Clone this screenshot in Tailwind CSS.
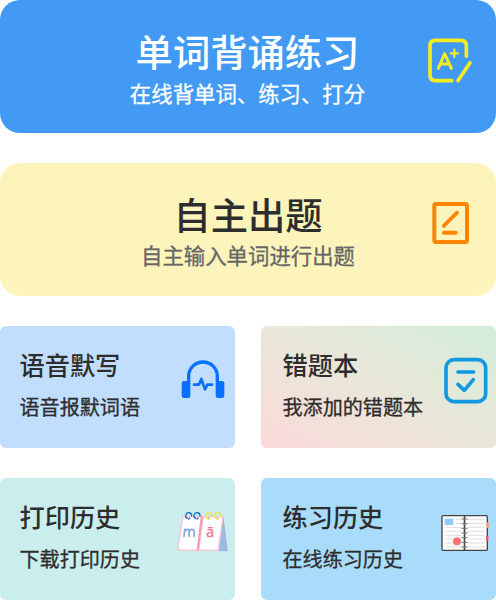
<!DOCTYPE html>
<html lang="zh-CN">
  <head>
    <meta charset="UTF-8" />
    <meta name="viewport" content="width=device-width, initial-scale=1.0" />
    <title>单词背诵练习</title>
    <script src="https://cdn.jsdelivr.net/npm/@tailwindcss/browser@4"></script>
  </head>
  <body class="bg-white font-['Noto_Sans_CJK_SC',sans-serif]">
    <div class="flex h-[600px] w-[496px] flex-col gap-[30px] overflow-hidden">
      <!-- recite -->
      <div class="flex h-[133px] shrink-0 rounded-[20px] bg-[#429af5] text-white">
        <div class="flex-1 pt-[31px] pl-[67px] text-center">
          <h1 class="text-[37.3px] leading-10 font-medium">单词背诵练习</h1>
          <p class="mt-2 text-[21.4px] leading-7 [-webkit-text-stroke:0.3px_#fff]">在线背单词、练习、打分</p>
        </div>
        <svg class="mt-[38px] mr-[22px] h-[46px] w-[46px]" viewBox="39 39 138 138" fill="none" stroke="#f5ec20" stroke-width="11" stroke-linecap="round" stroke-linejoin="round">
          <path d="M154 94V62Q154 46 138 46H61Q45 46 45 62V150Q45 167 61 167H110" />
          <path d="M165 113L129 167" />
          <path d="M70 130L89 86L109 130M77 117H102" stroke-width="9" />
          <path d="M118 74V96M107 85H129" stroke-width="7" />
        </svg>
      </div>

      <!-- custom questions -->
      <div class="flex h-[133px] shrink-0 rounded-[20px] bg-[#fcf4bb]">
        <div class="flex-1 pt-[31px] pl-[64px] text-center">
          <h1 class="text-[37.3px] leading-10 font-medium text-[#2d2d2d]">自主出题</h1>
          <p class="mt-[7px] text-[21.4px] leading-7 text-[#666] [-webkit-text-stroke:0.3px_#666]">自主输入单词进行出题</p>
        </div>
        <svg class="mt-[38px] mr-[26px] h-11 w-[38px]" viewBox="50 48 114 132" fill="none" stroke="#ff8400" stroke-width="12" stroke-linecap="round" stroke-linejoin="round">
          <rect x="57" y="57" width="98" height="114" rx="5" />
          <path d="M86 122L125 83" stroke-width="11" />
          <path d="M81 119V128H90Z" fill="#ff8400" stroke="none" />
          <path d="M86 143H121" />
        </svg>
      </div>

      <div class="grid grid-cols-2 gap-x-[26px] gap-y-[30px] text-[#2d2d2d]">
        <!-- dictation -->
        <div class="flex h-[122px] justify-between rounded-[6px] bg-[#c1deff] pt-6 pl-[19.5px]">
          <div>
            <h2 class="text-[25.2px] leading-7 font-medium">语音默写</h2>
            <p class="mt-[17px] text-[20.1px] leading-6 [-webkit-text-stroke:0.3px_#2d2d2d]">语音报默词语</p>
          </div>
          <svg class="mt-[9px] mr-[10px] h-10 w-[44px]" viewBox="47 117 132 120" fill="none" stroke="#0870ff" stroke-width="10" stroke-linecap="round" stroke-linejoin="round">
            <path d="M70 186V168A43 42 0 0 1 156 168V186" />
            <rect x="49" y="183" width="26" height="51" rx="7" fill="#0870ff" stroke="none" />
            <rect x="151" y="183" width="26" height="51" rx="7" fill="#0870ff" stroke="none" />
            <path d="M86 194H101L108 177L119 208L126 194H140" stroke-width="8" />
          </svg>
        </div>

        <!-- mistakes -->
        <div class="flex h-[122px] justify-between rounded-[6px] bg-linear-to-tr from-[#fbd9d9] via-[#e9e7d9] to-[#d2edda] pt-6 pl-[21.5px]">
          <div>
            <h2 class="text-[25.2px] leading-7 font-medium">错题本</h2>
            <p class="mt-[17px] text-[20.1px] leading-6 [-webkit-text-stroke:0.3px_#2d2d2d]">我添加的错题本</p>
          </div>
          <svg class="mt-[7px] mr-[8px] h-[48px] w-11" viewBox="56 51 132 144" fill="none" stroke="#1298e0" stroke-width="11" stroke-linecap="round" stroke-linejoin="round">
            <rect x="62" y="59" width="119" height="126" rx="24" />
            <path d="M98 96H145M98 133L117 151L144 119" />
          </svg>
        </div>

        <!-- print history -->
        <div class="flex h-[122px] justify-between rounded-[6px] bg-[#caeeed] pt-6 pl-[19.5px]">
          <div>
            <h2 class="text-[25.2px] leading-7 font-medium">打印历史</h2>
            <p class="mt-[17px] text-[20.1px] leading-6 [-webkit-text-stroke:0.3px_#2d2d2d]">下载打印历史</p>
          </div>
          <svg class="mt-[8px] mr-[6px] h-[42px] w-[52px]" viewBox="35 119 156 126" fill="none" stroke-linecap="round" stroke-linejoin="round">
            <path d="M173 139L186 241H157Z" fill="#9eb9e3" stroke="#8eaadb" stroke-width="2" />
            <path d="M52 139H110L98 240H43Q37 240 38 233Z" fill="#fff" stroke="#f6c3d0" stroke-width="4" />
            <path d="M114 139H173L159 240H100Z" fill="#fff" stroke="#f6c3d0" stroke-width="4" />
            <path d="M109 139L97 240" stroke="#f39bad" stroke-width="6" />
            <path d="M40 236L42 240H96M102 240H157" stroke="#f7c5d0" stroke-width="4" />
            <path d="M56 198L58 177M58 184Q65 172 71 180V198M71 184Q80 172 86 181Q88 190 86 198" stroke="#83a9dc" stroke-width="5" />
            <text x="122" y="199" font-size="44" font-family="Noto Sans" fill="#ed7890" stroke="#ed7890" stroke-width="1">ā</text>
            <g stroke-width="4">
              <path d="M66 144A9 9 0 1 1 79 137M91 144A9 9 0 1 1 104 137" stroke="#2272c5" />
              <path d="M126 144A9 9 0 1 1 139 137M153 144A9 9 0 1 1 166 137" stroke="#ece45c" />
            </g>
            <path d="M70 146L73 143M95 146L98 143" stroke="#2a66b0" stroke-width="4" />
            <path d="M129 146L131 143M156 146L158 143" stroke="#b5b43c" stroke-width="4" />
          </svg>
        </div>

        <!-- practice history -->
        <div class="flex h-[122px] justify-between rounded-[6px] bg-[#a9dcfa] pt-6 pl-[21.5px]">
          <div>
            <h2 class="text-[25.2px] leading-7 font-medium">练习历史</h2>
            <p class="mt-[17px] text-[20.1px] leading-6 [-webkit-text-stroke:0.3px_#2d2d2d]">在线练习历史</p>
          </div>
          <svg class="mt-[12px] mr-[6px] h-[38px] w-[49px]" viewBox="50 132 147 114" fill="none">
            <rect x="184" y="155" width="10" height="21" rx="3" fill="#f5a36c" />
            <rect x="184" y="196" width="8" height="20" rx="3" fill="#fb5752" />
            <rect x="53" y="137" width="136" height="104" rx="3" fill="#fff" stroke="#484347" stroke-width="4" />
            <path d="M95 149H110M95 160H110M63 172H110M63 184H110M63 196H110M63 207H110M63 219H110M63 231H110M131 149H181M131 160H181M131 172H181M131 184H181M131 196H181M131 207H181M131 219H181M131 231H181" stroke="#dedcdc" stroke-width="3" />
            <rect x="61" y="146" width="26" height="19" fill="#8bcdf6" />
            <circle cx="98" cy="214" r="12" fill="#fb7373" />
            <path d="M120.500 137V241" stroke="#484347" stroke-width="5" />
            <path d="M111 147H130M111 161H130M111 175H130M111 189H130M111 203H130M111 217H130M111 231H130" stroke="#777" stroke-width="3" />
            <path d="M190 157V174" stroke="#f5a36c" stroke-width="5" />
            <path d="M188 198V214" stroke="#fb5752" stroke-width="5" />
          </svg>
        </div>
      </div>
    </div>
  </body>
</html>
